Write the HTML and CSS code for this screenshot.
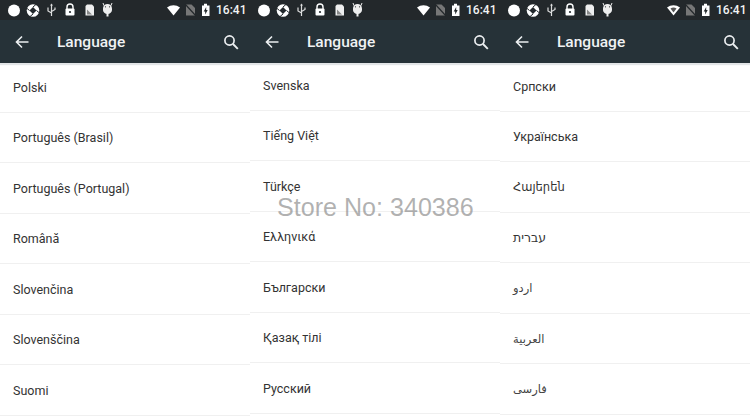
FILE: index.html
```html
<!DOCTYPE html>
<html lang="en">
<head>
<meta charset="UTF-8">
<meta name="viewport" content="width=device-width, initial-scale=1.0">
<title>Language</title>
<link rel="stylesheet" href="styles.css">
</head>
<body>
<svg class="defs" width="0" height="0">
    <symbol id="status-left" viewBox="0 0 120 20">
        <circle cx="14" cy="10.500" r="6" fill="#fff"/>
        <circle cx="33" cy="10.500" r="6.300" fill="#fff"/>
        <path d="M33 7l3.500 3.500-3.500 3.500-3.500-3.500z" fill="#23282b"/>
        <path d="M33 7l3.500-3M36.500 10.500l3 2.500M33 14l-3.500 3M29.500 10.500l-3-2.500" fill="none" stroke="#23282b" stroke-width="1"/>
        <path d="M51.500 5v11M48 7.500v3.500l3.500 2M55 7.500v2l-3.500 2" fill="none" stroke="#ddd" stroke-width="1.200"/>
        <path d="M50 5.500l1.500-2 1.500 2z" fill="#ddd"/>
        <path d="M67 9V7a3 3 0 0 1 6 0v2" fill="none" stroke="#fff" stroke-width="1.400"/>
        <rect x="65.500" y="8.500" width="9" height="7" rx="1" fill="#fff"/>
        <circle cx="70" cy="12" r="1.100" fill="#23282b"/>
        <path d="M87 4.500h5l2 2v9h-8.500v-9.500z" fill="#eee"/>
        <path d="M87 14.500v-5l5 5z" fill="#888"/>
        <path d="M103 8.500a4.500 4.500 0 0 1 9 0v1.500a4.500 4 0 0 1-9 0z" fill="#eee"/>
        <path d="M107.500 13v3.500" stroke="#eee" stroke-width="2"/>
        <path d="M104 5.500l-1-2.500M111 5.500l1-2.500" stroke="#eee"/>
        <circle cx="105.500" cy="6.800" r=".6" fill="#23282b"/>
        <circle cx="109.500" cy="6.800" r=".6" fill="#23282b"/>
    </symbol>
    <symbol id="status-right" viewBox="0 0 50 20">
        <path d="M0 7.500a10.500 10.500 0 0 1 13 0L6.500 15.500z" fill="#fff"/>
        <path d="M19 4.500h5.500l3.500 3.500v7.500H19z" fill="#777"/>
        <path d="M18 4l11 12" stroke="#23282b" stroke-width="1.200"/>
        <path d="M35 5.500h2V3.700h3v1.800h2.500v10.500H35z" fill="#fff"/>
        <path d="M39.200 7l-2.500 4.500h1.500v3l2.500-4.500h-1.500z" fill="#23282b"/>
    </symbol>
    <symbol id="status-right-alt" viewBox="0 0 50 20">
        <path d="M0 7.500a10.500 10.500 0 0 1 13 0L6.500 15.500z" fill="#fff"/>
        <path d="M3.500 8.500a5 5 0 0 1 6 0L6.500 12.500z" fill="#555"/>
        <path d="M19 4.500h5.500l3.500 3.500v7.500H19z" fill="#777"/>
        <path d="M18 4l11 12" stroke="#23282b" stroke-width="1.200"/>
        <path d="M35 5.500h2V3.700h3v1.800h2.500v10.500H35z" fill="#fff"/>
        <path d="M39.200 7l-2.500 4.500h1.500v3l2.500-4.500h-1.500z" fill="#23282b"/>
    </symbol>
    <symbol id="arrow-back" viewBox="0 0 16 16">
        <path d="M14.500 8H2.500M8 2.500L2.500 8 8 13.500" fill="none" stroke="#eceff1" stroke-width="1.600"/>
    </symbol>
    <symbol id="search" viewBox="0 0 16 16">
        <circle cx="6.500" cy="6.500" r="4.600" fill="none" stroke="#eceff1" stroke-width="1.700"/>
        <path d="M10 10l4.800 4.800" stroke="#eceff1" stroke-width="1.900"/>
    </symbol>
</svg>

<div class="screens">
    <section class="screen">
        <div class="status-bar">
            <svg class="status-icons"><use href="#status-left"/></svg>
            <svg class="status-right"><use href="#status-right"/></svg>
            <span class="clock">16:41</span>
        </div>
        <header class="toolbar">
            <svg class="icon-back"><use href="#arrow-back"/></svg>
            <h1>Language</h1>
            <svg class="icon-search"><use href="#search"/></svg>
        </header>
        <ul class="lang-list list-first">
            <li>Polski</li>
            <li>Português (Brasil)</li>
            <li>Português (Portugal)</li>
            <li>Română</li>
            <li>Slovenčina</li>
            <li>Slovenščina</li>
            <li>Suomi</li>
        </ul>
    </section>

    <section class="screen">
        <div class="status-bar">
            <svg class="status-icons"><use href="#status-left"/></svg>
            <svg class="status-right"><use href="#status-right"/></svg>
            <span class="clock">16:41</span>
        </div>
        <header class="toolbar">
            <svg class="icon-back"><use href="#arrow-back"/></svg>
            <h1>Language</h1>
            <svg class="icon-search"><use href="#search"/></svg>
        </header>
        <ul class="lang-list list-second">
            <li>Svenska</li>
            <li>Tiếng Việt</li>
            <li>Türkçe</li>
            <li>Ελληνικά</li>
            <li>Български</li>
            <li>Қазақ тілі</li>
            <li>Русский</li>
        </ul>
    </section>

    <section class="screen">
        <div class="status-bar">
            <svg class="status-icons"><use href="#status-left"/></svg>
            <svg class="status-right"><use href="#status-right-alt"/></svg>
            <span class="clock">16:41</span>
        </div>
        <header class="toolbar">
            <svg class="icon-back"><use href="#arrow-back"/></svg>
            <h1>Language</h1>
            <svg class="icon-search"><use href="#search"/></svg>
        </header>
        <ul class="lang-list list-third">
            <li>Српски</li>
            <li>Українська</li>
            <li class="lang-armenian">Հայերեն</li>
            <li class="lang-hebrew">עברית</li>
            <li class="lang-arabic">اردو</li>
            <li class="lang-arabic">العربية</li>
            <li class="lang-arabic">فارسی</li>
        </ul>
    </section>
</div>

<div class="watermark">Store No: 340386</div>
</body>
</html>
```

FILE: styles.css
```css
body {
    margin: 0;
    width: 750px;
    height: 417px;
    overflow: hidden;
    background: #fff;
    font-family: Roboto, "DejaVu Sans", sans-serif;
    position: relative;
}

.defs {
    position: absolute;
}

.screens {
    display: flex;
}

.screen {
    width: 250px;
    height: 417px;
    overflow: hidden;
}

.status-bar {
    height: 20px;
    background: #23282b;
    display: flex;
    align-items: center;
}

.status-icons {
    width: 120px;
    height: 20px;
}

.status-right {
    width: 50px;
    height: 20px;
    margin-left: 47px;
}

.clock {
    margin-left: -1px;
    color: #f2f2f2;
    font-size: 12px;
    font-weight: 500;
}

.toolbar {
    height: 43px;
    box-sizing: border-box;
    background: #263238;
    display: flex;
    align-items: center;
    padding: 1px 11px 0 14px;
    box-shadow: 0 2px 1px #e2e5e7;
    position: relative;
}

.toolbar h1 {
    margin: 0 0 0 27px;
    flex: 1;
    font-size: 15.5px;
    font-weight: 500;
    color: #f0f2f3;
}

.icon-back,
.icon-search {
    width: 16px;
    height: 16px;
}

.lang-list {
    list-style: none;
    margin: -1px 0 0;
    padding: 0;
}

.list-second {
    margin-top: -3px;
}

.list-third {
    margin-top: -2px;
}

.lang-list li {
    height: 50.5px;
    box-sizing: border-box;
    display: flex;
    align-items: center;
    padding: 1px 0 0 13px;
    border-bottom: 1px solid #f0f0f0;
    font-size: 12.5px;
    color: #333;
}

.lang-list .lang-armenian {
    font-size: 11.5px;
}

.lang-list .lang-arabic {
    font-size: 11.5px;
    color: #444;
}

.watermark {
    position: absolute;
    left: 277px;
    top: 193px;
    font-family: "Liberation Sans", sans-serif;
    font-size: 25.1px;
    color: rgba(125, 125, 125, 0.6);
}
```
